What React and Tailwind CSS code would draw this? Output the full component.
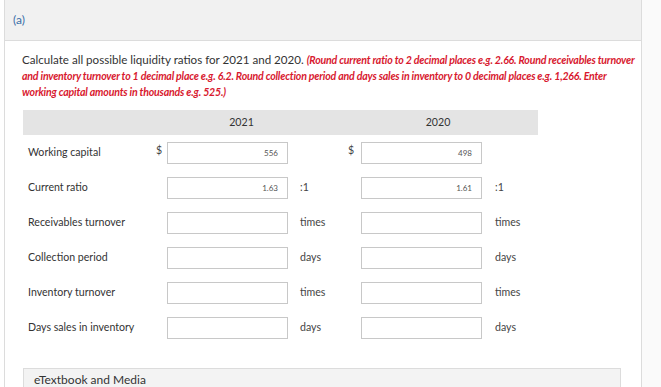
import React from "react";

const rows = [
  { label: "Working capital", dollar: true, a: "556", b: "498", unit: "" },
  { label: "Current ratio", dollar: false, a: "1.63", b: "1.61", unit: ":1" },
  { label: "Receivables turnover", dollar: false, a: "", b: "", unit: "times" },
  { label: "Collection period", dollar: false, a: "", b: "", unit: "days" },
  { label: "Inventory turnover", dollar: false, a: "", b: "", unit: "times" },
  { label: "Days sales in inventory", dollar: false, a: "", b: "", unit: "days" },
];

function Field({ value }) {
  return (
    <div className="w-[121px] h-[22px] border border-[#c8c8c8] bg-white flex items-center justify-end pr-[9px] text-[8px] text-[#555] shrink-0">
      {value}
    </div>
  );
}

function Group({ width, pad, dollar, value, unit, unitGap }) {
  return (
    <div className={`${width} flex items-center`}>
      <div className={`${pad} text-[10.6px] text-[#444] -mt-[3px]`}>{dollar ? "$" : ""}</div>
      <Field value={value} />
      <div className={`${unitGap} text-[10.6px] text-[#444]`}>{unit}</div>
    </div>
  );
}

export default function App() {
  return (
    <div
      className="w-[661px] h-[387px] overflow-hidden flex bg-[#fafafa]"
      style={{ fontFamily: "Lato, 'Liberation Sans', sans-serif" }}
    >
      <div className="w-[4px] bg-white shrink-0" />
      <div className="w-[638px] shrink-0 bg-white border-x border-[#dcdcdc] flex flex-col">
        <div className="h-[41px] bg-[#f1f1f1] border-b border-[#dcdcdc] flex items-center pl-[8px] text-[12px] text-[#3b6fa8] shrink-0">
          (a)
        </div>
        <div className="pl-[17px]">
          <p className="mt-[11px] h-[45px] w-[618px] text-[11.6px] leading-[15px] text-[#333]">
            Calculate all possible liquidity ratios for 2021 and 2020.{" "}
            <span className="text-[#d8192f] font-bold italic text-[10.6px] leading-[15px] tracking-[-0.2px]">
              (Round current ratio to 2 decimal places e.g. 2.66. Round receivables turnover and inventory
              turnover to 1 decimal place e.g. 6.2. Round collection period and days sales in inventory to 0
              decimal places e.g. 1,266. Enter working capital amounts in thousands e.g. 525.)
            </span>
          </p>

          <div className="mt-[13px] ml-[1px] w-[515px]">
            <div className="h-[25px] bg-[#e4e4e4] flex items-center text-[10.6px] text-[#333]">
              <div className="w-[122px]" />
              <div className="w-[193px] text-center">2021</div>
              <div className="w-[200px] text-center">2020</div>
            </div>
            {rows.map((r) => (
              <div key={r.label} className="h-[35px] flex items-center">
                <div className="w-[122px] pl-[5px] text-[10.6px] text-[#333]">{r.label}</div>
                <Group
                  width="w-[193px]"
                  pad="w-[22px] pl-[11px]"
                  dollar={r.dollar}
                  value={r.a}
                  unit={r.unit}
                  unitGap="ml-[12px]"
                />
                <Group
                  width="w-[200px]"
                  pad="w-[23px] pl-[10px]"
                  dollar={r.dollar}
                  value={r.b}
                  unit={r.unit}
                  unitGap="ml-[13px]"
                />
              </div>
            ))}
          </div>

          <div className="mt-[23px] ml-[1px] w-[598px] h-[40px] bg-[#f3f3f3] border border-[#dcdcdc] pl-[10px] pt-[2px] text-[12px] text-[#333]">
            eTextbook and Media
          </div>
        </div>
      </div>
      <div className="flex-1" />
    </div>
  );
}
